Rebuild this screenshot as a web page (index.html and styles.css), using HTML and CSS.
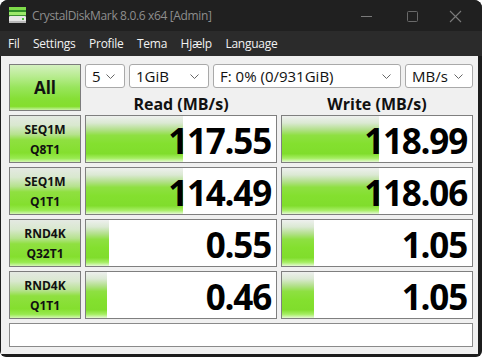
FILE: index.html
```html
<!DOCTYPE html>
<html lang="da">
<head>
<meta charset="utf-8">
<title>CrystalDiskMark 8.0.6 x64 [Admin]</title>
<link rel="stylesheet" href="styles.css">
</head>
<body>
<div class="window">
  <div class="titlebar">
    <svg class="app-icon" width="17" height="16" viewBox="0 0 17 16">
      <rect x="0" y="0" width="17" height="3" fill="#7fdc4a"/>
      <rect x="0" y="3" width="17" height="2" fill="#2f8f2a"/>
      <rect x="0" y="5" width="17" height="3" fill="#9be86a"/>
      <rect x="0" y="8" width="17" height="1" fill="#3a8f30"/>
      <rect x="0" y="9" width="17" height="7" rx="1" fill="#e6e6e6"/>
      <rect x="0" y="14" width="17" height="2" fill="#b8b8b8"/>
      <rect x="13" y="11" width="2" height="2" fill="#4cc23a"/>
    </svg>
    <span class="title">CrystalDiskMark 8.0.6 x64 [Admin]</span>
    <div class="controls">
      <svg class="ctl" width="46" height="30" viewBox="0 0 46 30"><line x1="21" y1="15.5" x2="32" y2="15.5" stroke="#7a7a7a" stroke-width="1"/></svg>
      <svg class="ctl" width="46" height="30" viewBox="0 0 46 30"><rect x="21.5" y="10.5" width="10" height="10" rx="1" fill="none" stroke="#6a6a6a" stroke-width="1"/></svg>
      <svg class="ctl" width="46" height="30" viewBox="0 0 46 30"><path d="M18 10 L29 21 M29 10 L18 21" stroke="#7a7a7a" stroke-width="1.1"/></svg>
    </div>
  </div>
  <div class="menubar">
    <span class="menu-item">Fil</span>
    <span class="menu-item">Settings</span>
    <span class="menu-item">Profile</span>
    <span class="menu-item">Tema</span>
    <span class="menu-item">Hjælp</span>
    <span class="menu-item">Language</span>
  </div>
  <div class="content">
    <div class="grid">
      <div class="btn all">All</div>
      <div class="top">
        <div class="selects">
          <div class="combo c-count"><span>5</span><svg class="chev" width="9" height="5" viewBox="0 0 9 5"><path d="M0.5 0.5 L4.5 4.5 L8.5 0.5" fill="none" stroke="#666" stroke-width="1"/></svg></div>
          <div class="combo c-size"><span>1GiB</span><svg class="chev" width="9" height="5" viewBox="0 0 9 5"><path d="M0.5 0.5 L4.5 4.5 L8.5 0.5" fill="none" stroke="#666" stroke-width="1"/></svg></div>
          <div class="combo c-drive"><span>F: 0% (0/931GiB)</span><svg class="chev" width="9" height="5" viewBox="0 0 9 5"><path d="M0.5 0.5 L4.5 4.5 L8.5 0.5" fill="none" stroke="#666" stroke-width="1"/></svg></div>
          <div class="combo c-unit"><span>MB/s</span><svg class="chev" width="9" height="5" viewBox="0 0 9 5"><path d="M0.5 0.5 L4.5 4.5 L8.5 0.5" fill="none" stroke="#666" stroke-width="1"/></svg></div>
        </div>
        <div class="headers">
          <div class="head">Read (MB/s)</div>
          <div class="head">Write (MB/s)</div>
        </div>
      </div>

      <div class="btn label">SEQ1M<br>Q8T1</div>
      <div class="cell"><div class="bar" style="width:51.2%"></div><span class="val">117.55</span></div>
      <div class="cell"><div class="bar" style="width:51.3%"></div><span class="val">118.99</span></div>

      <div class="btn label">SEQ1M<br>Q1T1</div>
      <div class="cell"><div class="bar" style="width:51%"></div><span class="val">114.49</span></div>
      <div class="cell"><div class="bar" style="width:51.2%"></div><span class="val">118.06</span></div>

      <div class="btn label">RND4K<br>Q32T1</div>
      <div class="cell"><div class="bar" style="width:12%"></div><span class="val">0.55</span></div>
      <div class="cell"><div class="bar" style="width:16.8%"></div><span class="val">1.05</span></div>

      <div class="btn label">RND4K<br>Q1T1</div>
      <div class="cell"><div class="bar" style="width:11%"></div><span class="val">0.46</span></div>
      <div class="cell"><div class="bar" style="width:16.8%"></div><span class="val">1.05</span></div>
    </div>
    <div class="status"></div>
  </div>
</div>
</body>
</html>
```

FILE: styles.css
```css
* { box-sizing: border-box; }
html, body { margin: 0; padding: 0; }
body {
  width: 482px;
  height: 357px;
  background: #ffffff;
  font-family: "Open Sans", "Noto Sans", sans-serif;
  overflow: hidden;
}
.window {
  width: 482px;
  height: 357px;
  background: #1c1c1c;
  border-radius: 8px 8px 6px 6px;
  overflow: hidden;
  display: flex;
  flex-direction: column;
}
.titlebar {
  height: 31px;
  background: #202020;
  display: flex;
  align-items: center;
  padding-left: 9px;
}
.app-icon { display: block; margin-top: -1px; }
.title {
  margin-left: 6px;
  color: #8e8e8e;
  font-size: 12px;
  letter-spacing: -0.35px;
  margin-top: -1px;
}
.controls {
  margin-left: auto;
  display: flex;
  align-items: center;
  margin-right: 4px;
}
.ctl { display: block; }
.menubar {
  height: 25px;
  background: #2b2b2b;
  display: flex;
  align-items: center;
  padding-left: 8px;
  gap: 13.5px;
}
.menu-item {
  color: #f2f2f2;
  font-size: 12px;
  letter-spacing: -0.25px;
}
.content {
  flex: 1;
  margin: 0 4px 3px 1px;
  background: #f0f0f0;
  padding: 8px 5px 7px 8px;
  display: flex;
  flex-direction: column;
  gap: 4px;
}
.grid {
  display: grid;
  grid-template-columns: 72px 192px 192px;
  grid-template-rows: 47px 48px 48px 48px 48px;
  column-gap: 4px;
  row-gap: 4px;
}
.btn {
  border: 1px solid #7c7c7c;
  display: flex;
  align-items: center;
  justify-content: center;
  text-align: center;
  font-weight: 700;
  color: #111;
  background: linear-gradient(to bottom,
    #e4e9e2 0%, #d9e8cf 20%, #b6e28e 40%, #8fe040 52%,
    #84df2e 80%, #98ea50 92%, #d4f7b4 100%);
}
.all {
  font-size: 17px;
  background: linear-gradient(to bottom,
    #d4f0c0 0%, #b8ec90 25%, #98e55c 50%, #86df36 75%,
    #84de2e 92%, #c8f2a6 100%);
}
.label {
  font-size: 12px;
  line-height: 20px;
  padding-top: 1px;
}
.top {
  grid-column: 2 / 4;
  display: flex;
  flex-direction: column;
}
.selects {
  display: flex;
  gap: 4px;
  height: 24px;
}
.combo {
  background: #ffffff;
  border: 1px solid #a9a9a9;
  border-radius: 3px;
  display: flex;
  align-items: center;
  justify-content: space-between;
  padding: 0 9px 0 6px;
  font-size: 15px;
  color: #111;
}
.combo span { margin-top: -1px; }
.chev { display: block; }
.c-count { width: 40px; }
.c-size { width: 80px; }
.c-drive { width: 188px; }
.c-unit { width: 68px; }
.headers {
  display: grid;
  grid-template-columns: 192px 192px;
  column-gap: 4px;
  flex: 1;
  align-items: end;
}
.head {
  text-align: center;
  font-weight: 700;
  font-size: 16px;
  line-height: 20px;
  margin-bottom: -3px;
  color: #111;
}
.cell {
  position: relative;
  background: #ffffff;
  border: 1px solid #7f7f7f;
  display: flex;
  align-items: center;
  justify-content: flex-end;
  padding-right: 5px;
}
.bar {
  position: absolute;
  left: 0;
  top: 0;
  bottom: 0;
  background: linear-gradient(to bottom,
    #eef0ee 0%, #dbe9d3 15%, #b2e08a 30%, #8ee042 42%,
    #84e02f 60%, #80dd2c 82%, #a6ee64 92%, #e6f9d4 100%);
}
.val {
  position: relative;
  font-weight: 700;
  font-size: 35px;
  letter-spacing: -1.2px;
  color: #000;
  line-height: 1;
  margin-top: 3px;
}
.status {
  height: 24px;
  background: #ffffff;
  border: 1px solid #8a8a8a;
  width: 464px;
}
```
